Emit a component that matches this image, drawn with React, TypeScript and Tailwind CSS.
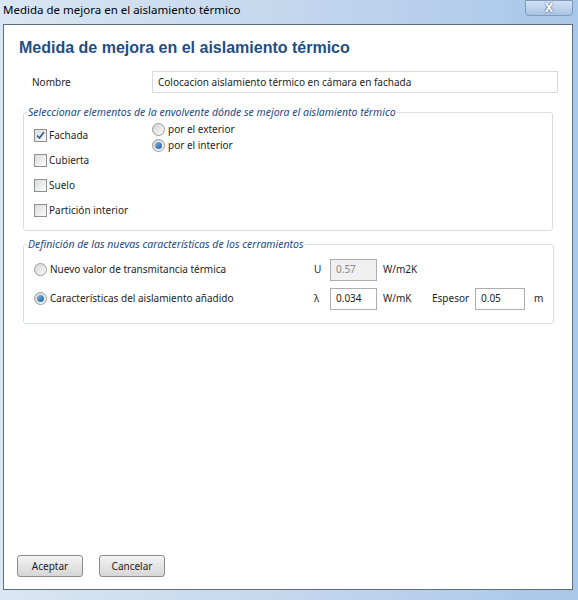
import React from 'react';

const font = { fontFamily: '"Noto Sans", "Open Sans", sans-serif' };

const CheckBox = ({ checked, label }: { checked?: boolean; label: string }) => (
  <div className="flex items-center gap-[2px] h-[16px]">
    <span className="w-[13px] h-[13px] border border-[#8e8f8f] bg-gradient-to-br from-[#dcdcdc] to-[#fbfbfb] flex items-center justify-center">
      {checked && (
        <svg width="9" height="9" viewBox="0 0 9 9">
          <path d="M1 4.5 L3.5 7 L8 1" fill="none" stroke="#3a5a8a" strokeWidth="1.6" />
        </svg>
      )}
    </span>
    <span className="text-[10px] text-[#1e1e1e]">{label}</span>
  </div>
);

const Radio = ({ checked, label }: { checked?: boolean; label: string }) => (
  <div className="flex items-center gap-[3px] h-[16px]">
    <span className="w-[13px] h-[13px] rounded-full border border-[#9a9a9a] bg-gradient-to-br from-[#d4d4d4] to-[#fafafa] flex items-center justify-center">
      {checked && <span className="w-[7px] h-[7px] rounded-full bg-gradient-to-br from-[#7fb7e8] to-[#1b5c9c]" />}
    </span>
    <span className="text-[10px] text-[#1e1e1e]">{label}</span>
  </div>
);

const Field = ({ value, disabled, w }: { value: string; disabled?: boolean; w: string }) => (
  <div
    className={`${w} h-[22px] border border-[#abadb3] flex items-center px-[5px] text-[10px] ${
      disabled ? 'bg-[#f0f0f0] text-[#8a8a8a]' : 'bg-white text-[#1e1e1e]'
    }`}
  >
    {value}
  </div>
);

const Group = ({ title, children, h }: { title: string; children: React.ReactNode; h: string }) => (
  <fieldset className={`border border-[#d5dfe5] rounded-[3px] ${h} mx-[19px] px-[10px]`}>
    <legend className="ml-[-7px] px-[1px] text-[10.5px] italic text-[#1e4a8c]">{title}</legend>
    {children}
  </fieldset>
);

export default function App() {
  return (
    <div className="w-[578px] h-[600px] flex flex-col bg-gradient-to-r from-[#d9e6f3] via-[#c3d7ee] to-[#a9c7e8]" style={font}>
      <div className="h-[24px] flex items-start justify-between pl-[3px] pr-[5px]">
        <span className="text-[11.5px] leading-[20px] text-black">Medida de mejora en el aislamiento térmico</span>
        <div className="w-[48px] h-[16px] border border-[#7f9cc0] rounded-b-[4px] bg-gradient-to-b from-[#d3e2f2] to-[#a9c4e4] flex items-center justify-center">
          <span className="text-white font-bold text-[12px] leading-none [text-shadow:0_0_2px_#1c3b66]">X</span>
        </div>
      </div>
      <div className="flex-1 ml-[3px] mr-[5px] border border-[#5d6c7e] bg-white flex flex-col">
        <h1 className="pl-[15px] pt-[12px] text-[16px] font-bold text-[#1f4e86] leading-[22px]" style={{ fontFamily: '"Liberation Sans", Arial, sans-serif' }}>
          Medida de mejora en el aislamiento térmico
        </h1>
        <div className="flex items-center mt-[12px] pl-[28px] pr-[14px]">
          <span className="w-[120px] text-[10px] text-[#1e1e1e]">Nombre</span>
          <div className="flex-1 h-[22px] border border-[#d7dbe0] flex items-center px-[5px] text-[10px] text-[#1e1e1e]">
            Colocacion aislamiento térmico en cámara en fachada
          </div>
        </div>
        <div className="mt-[12px]">
          <Group title="Seleccionar elementos de la envolvente dónde se mejora el aislamiento térmico" h="h-[126px]">
            <div className="flex">
              <div className="w-[118px] flex flex-col gap-[9px] pt-[7px]">
                <CheckBox checked label="Fachada" />
                <CheckBox label="Cubierta" />
                <CheckBox label="Suelo" />
                <CheckBox label="Partición interior" />
              </div>
              <div className="flex flex-col pt-[1px]">
                <Radio label="por el exterior" />
                <Radio checked label="por el interior" />
              </div>
            </div>
          </Group>
        </div>
        <div className="mt-[6px]">
          <Group title="Definición de las nuevas características de los cerramientos" h="h-[87px]">
            <div className="flex flex-col gap-[7px] pt-[6px]">
              <div className="flex items-center">
                <div className="w-[280px]">
                  <Radio label="Nuevo valor de transmitancia térmica" />
                </div>
                <span className="w-[16px] text-[10px] text-[#1e1e1e]">U</span>
                <Field value="0.57" disabled w="w-[47px]" />
                <span className="ml-[6px] text-[10px] text-[#1e1e1e]">W/m2K</span>
              </div>
              <div className="flex items-center">
                <div className="w-[280px]">
                  <Radio checked label="Características del aislamiento añadido" />
                </div>
                <span className="w-[16px] text-[10px] text-[#1e1e1e]">λ</span>
                <Field value="0.034" w="w-[47px]" />
                <span className="ml-[6px] w-[49px] text-[10px] text-[#1e1e1e]">W/mK</span>
                <span className="w-[43px] text-[10px] text-[#1e1e1e]">Espesor</span>
                <Field value="0.05" w="w-[50px]" />
                <span className="ml-[9px] text-[10px] text-[#1e1e1e]">m</span>
              </div>
            </div>
          </Group>
        </div>
        <div className="flex-1" />
        <div className="flex gap-[16px] pl-[13px] pb-[12px]">
          <button className="w-[66px] h-[22px] border border-[#8a8a8a] rounded-[3px] bg-gradient-to-b from-[#f4f4f4] to-[#d6d6d6] text-[10px] text-[#1e1e1e]">
            Aceptar
          </button>
          <button className="w-[66px] h-[22px] border border-[#8a8a8a] rounded-[3px] bg-gradient-to-b from-[#f4f4f4] to-[#d6d6d6] text-[10px] text-[#1e1e1e]">
            Cancelar
          </button>
        </div>
      </div>
      <div className="h-[10px]" />
    </div>
  );
}
